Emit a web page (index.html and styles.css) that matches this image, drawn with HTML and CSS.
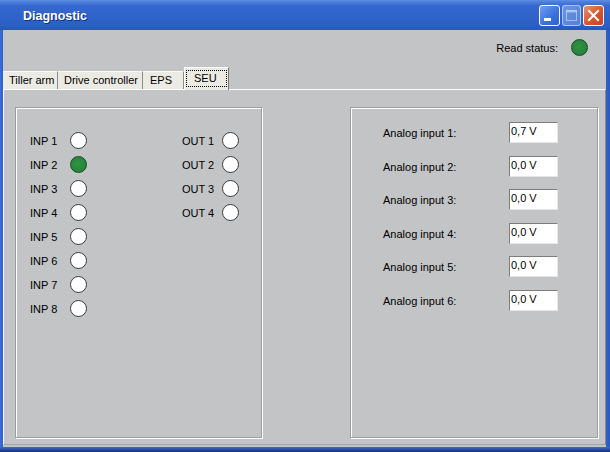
FILE: index.html
```html
<!DOCTYPE html>
<html lang="en">
<head>
  <meta charset="UTF-8" />
  <title>Diagnostic</title>
  <link rel="stylesheet" href="styles.css">
</head>
<body>
  <div class="window">
    <!-- Title bar -->
    <div class="titlebar">
      <span class="title">Diagnostic</span>
      <div class="caption-buttons">
        <div class="cap-btn cap-min">
          <svg width="19" height="19" viewBox="0 0 19 19"><rect x="4" y="12" width="7" height="3" fill="#fff"/></svg>
        </div>
        <div class="cap-btn cap-max">
          <svg width="17" height="19" viewBox="0 0 17 19"><rect x="3.5" y="4.5" width="10" height="10" fill="none" stroke="rgba(255,255,255,0.45)" stroke-width="1"/><rect x="3.5" y="4.5" width="10" height="2" fill="rgba(255,255,255,0.45)"/></svg>
        </div>
        <div class="cap-btn cap-close">
          <svg width="19" height="19" viewBox="0 0 19 19"><path d="M5 5 L14 14 M14 5 L5 14" stroke="#fff" stroke-width="2" stroke-linecap="square"/></svg>
        </div>
      </div>
    </div>

    <div class="frame">
      <div class="client">
        <div class="status-row">
          <span class="status-label">Read status:</span>
          <span class="led led-on"></span>
        </div>

        <!-- Tabs -->
        <div class="tabs">
          <div class="tab tab-tiller">Tiller arm</div>
          <div class="tab tab-drive">Drive controller</div>
          <div class="tab tab-eps">EPS</div>
          <div class="tab tab-selected"><span class="focus">SEU</span></div>
        </div>

        <div class="tab-page">
          <!-- Digital I/O -->
          <div class="groupbox io-box">
            <div class="io-col">
              <div class="io-row"><span class="io-label">INP 1</span><span class="led"></span></div>
              <div class="io-row"><span class="io-label">INP 2</span><span class="led led-on"></span></div>
              <div class="io-row"><span class="io-label">INP 3</span><span class="led"></span></div>
              <div class="io-row"><span class="io-label">INP 4</span><span class="led"></span></div>
              <div class="io-row"><span class="io-label">INP 5</span><span class="led"></span></div>
              <div class="io-row"><span class="io-label">INP 6</span><span class="led"></span></div>
              <div class="io-row"><span class="io-label">INP 7</span><span class="led"></span></div>
              <div class="io-row"><span class="io-label">INP 8</span><span class="led"></span></div>
            </div>
            <div class="io-col">
              <div class="io-row"><span class="io-label">OUT 1</span><span class="led"></span></div>
              <div class="io-row"><span class="io-label">OUT 2</span><span class="led"></span></div>
              <div class="io-row"><span class="io-label">OUT 3</span><span class="led"></span></div>
              <div class="io-row"><span class="io-label">OUT 4</span><span class="led"></span></div>
            </div>
          </div>

          <!-- Analog inputs -->
          <div class="groupbox analog-box">
            <div class="analog-row"><span class="analog-label">Analog input 1:</span><span class="field">0,7 V</span></div>
            <div class="analog-row"><span class="analog-label">Analog input 2:</span><span class="field">0,0 V</span></div>
            <div class="analog-row"><span class="analog-label">Analog input 3:</span><span class="field">0,0 V</span></div>
            <div class="analog-row"><span class="analog-label">Analog input 4:</span><span class="field">0,0 V</span></div>
            <div class="analog-row"><span class="analog-label">Analog input 5:</span><span class="field">0,0 V</span></div>
            <div class="analog-row"><span class="analog-label">Analog input 6:</span><span class="field">0,0 V</span></div>
          </div>
        </div>
      </div>
    </div>
    <div class="frame-bottom"></div>
  </div>
</body>
</html>
```

FILE: styles.css
```css
/* ------------------------------
   BASE
------------------------------- */
* {
  margin: 0;
  padding: 0;
  box-sizing: border-box;
}
body {
  width: 610px;
  height: 452px;
  overflow: hidden;
  font-family: 'Liberation Sans', Arial, sans-serif;
  font-size: 11px;
  color: #000;
  background: #c3c4c6;
}

/* ------------------------------
   WINDOW FRAME
------------------------------- */
.window {
  width: 610px;
  height: 452px;
  display: flex;
  flex-direction: column;
}
.titlebar {
  height: 30px;
  flex: none;
  display: flex;
  align-items: center;
  justify-content: space-between;
  padding: 0 6px 0 23px;
  background: linear-gradient(#5f8fe2 0, #4a7ddb 2px, #3569d0 6px, #3064ca 50%, #2c5fc4 85%, #2657bb 100%);
}
.title {
  color: #fff;
  font-weight: bold;
  font-size: 12.5px;
  text-shadow: 1px 1px 0 #10307a;
  margin-top: 1px;
}
.caption-buttons {
  display: flex;
  gap: 2px;
  margin-top: 1px;
}
.cap-btn {
  width: 21px;
  height: 21px;
  border: 1px solid #fff;
  border-radius: 3px;
  display: flex;
  align-items: center;
  justify-content: center;
}
.cap-min {
  background: linear-gradient(135deg, #6f9ff0, #3a70dc 60%, #2d62d0);
}
.cap-max {
  width: 19px;
  border-color: rgba(255, 255, 255, 0.5);
  background: linear-gradient(135deg, #6c95e0, #5080d8);
}
.cap-close {
  background: linear-gradient(135deg, #ec9270, #d9562c 55%, #c4441c);
}
.frame {
  flex: 1;
  display: flex;
  padding: 0 4px 0 3px;
  background: linear-gradient(90deg, #3b6fd6 0, #2d61cb 3px, #2d61cb calc(100% - 4px), #2a5ac0 100%);
}
.frame-bottom {
  height: 5px;
  flex: none;
  background: linear-gradient(#3e6ccd, #26479e 60%, #1a2f6a);
}

/* ------------------------------
   CLIENT AREA
------------------------------- */
.client {
  flex: 1;
  display: flex;
  flex-direction: column;
  background: #c3c4c6;
}
.status-row {
  height: 37px;
  flex: none;
  display: flex;
  justify-content: flex-end;
  align-items: flex-start;
  padding: 9px 18px 0 0;
  gap: 13px;
}
.status-label {
  line-height: 18px;
}

/* LEDs */
.led {
  width: 17px;
  height: 17px;
  border-radius: 50%;
  border: 1px solid #3a3a3a;
  background: #fff;
  flex: none;
}
.led-on {
  background: radial-gradient(circle at 45% 45%, #2f9444, #247c36);
  border-color: #174a22;
}

/* ------------------------------
   TABS
------------------------------- */
.tabs {
  height: 22px;
  flex: none;
  display: flex;
  align-items: flex-end;
}
.tab {
  height: 18px;
  line-height: 17px;
  padding-left: 6px;
  background: #ebebe4;
  border-top: 1px solid #fafaf6;
  border-right: 1px solid #8c8c8c;
}
.tab-tiller { width: 55px; }
.tab-drive { width: 85px; }
.tab-eps { width: 41px; padding-left: 7px; }
.tab-selected {
  width: 45px;
  height: 23px;
  margin-bottom: -1px;
  padding: 2px 1px 0 1px;
  background: #ebebe4;
  border-top: 1px solid #fff;
  border-left: 1px solid #fff;
  border-right: 1px solid #7a7a7a;
  position: relative;
  z-index: 1;
}
.focus {
  display: block;
  height: 17px;
  line-height: 14px;
  padding-left: 7px;
  border: 1px dotted #000;
}

/* ------------------------------
   TAB PAGE
------------------------------- */
.tab-page {
  flex: 1;
  display: flex;
  gap: 88px;
  margin-bottom: 2px;
  padding: 17px 7px 6px 11px;
  border-top: 1px solid #fff;
  border-left: 1px solid #fff;
  border-right: 1px solid #8a8a8a;
  border-bottom: 1px solid #a2a2a2;
}
.groupbox {
  border: 1px solid #9d9d9d;
  box-shadow: inset 1px 1px 0 #fff, 1px 1px 0 #fff;
}

/* Digital inputs / outputs */
.io-box {
  width: 247px;
  display: flex;
  gap: 95px;
  padding: 20px 0 0 14px;
}
.io-col {
  display: flex;
  flex-direction: column;
}
.io-row {
  height: 24px;
  display: flex;
  align-items: center;
}
.io-label {
  width: 40px;
  margin-top: 1px;
}

/* Analog inputs */
.analog-box {
  flex: 1;
  display: flex;
  flex-direction: column;
  gap: 12.6px;
  padding: 14px 0 0 32px;
}
.analog-row {
  height: 21px;
  display: flex;
  align-items: center;
}
.analog-label {
  width: 126px;
  margin-top: 1px;
}
.field {
  width: 49px;
  height: 21px;
  background: #fff;
  border-top: 1px solid #7c7c7c;
  border-left: 1px solid #7c7c7c;
  border-right: 1px solid #e6e6e6;
  border-bottom: 1px solid #e6e6e6;
  padding-left: 1px;
  line-height: 17px;
}
```
